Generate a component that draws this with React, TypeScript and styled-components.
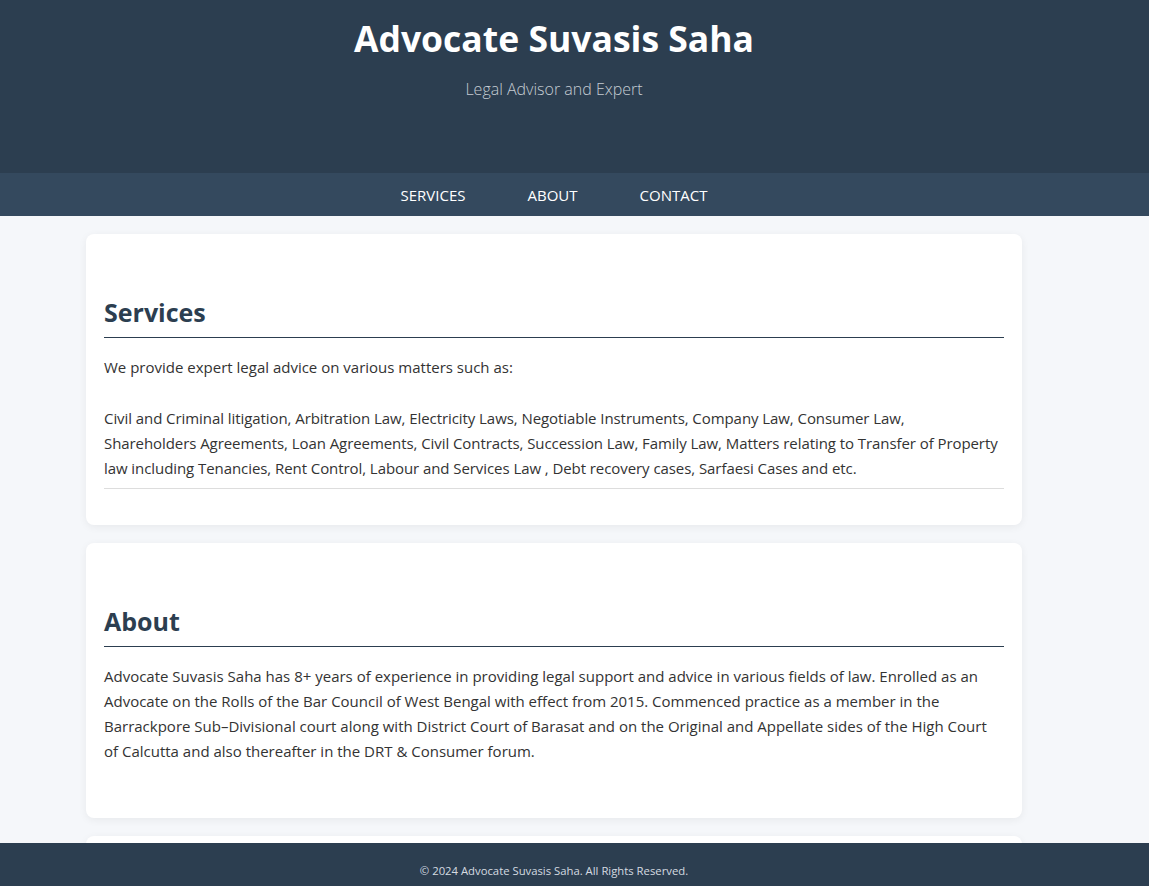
import React from "react";
import styled, { createGlobalStyle } from "styled-components";

const GlobalStyle = createGlobalStyle`
  html, body { margin: 0; padding: 0; }
  body {
    background: #f5f7fa;
    font-family: "Open Sans", "Noto Sans", sans-serif;
    color: #333;
  }
`;

const SHIFT = "41px";

const Header = styled.header`
  background: #2c3e50;
  color: #fff;
  height: 173px;
  padding-right: ${SHIFT};
  display: flex;
  flex-direction: column;
  align-items: center;
`;

const Title = styled.h1`
  margin: 14px 0 0;
  font-size: 35.5px;
  font-weight: 700;
  line-height: 48px;
`;

const Subtitle = styled.p`
  margin: 16px 0 0;
  font-size: 16px;
  font-weight: 300;
  color: #c5ccd3;
  line-height: 22px;
`;

const Nav = styled.nav`
  background: #34495e;
  height: 43px;
  padding-right: ${SHIFT};
  display: flex;
  justify-content: center;
  align-items: center;
`;

const NavLink = styled.a`
  color: #fff;
  text-decoration: none;
  font-size: 15px;
  line-height: 20px;
  margin: 1px 31px 0;
  text-transform: uppercase;
`;

const Main = styled.main`
  padding: 18px ${SHIFT} 60px 0;
  display: flex;
  flex-direction: column;
  align-items: center;
  gap: 18px;
`;

const Card = styled.section<{ $tail: number }>`
  width: 900px;
  background: #fff;
  border-radius: 8px;
  box-shadow: 0 2px 8px rgba(0, 0, 0, 0.06);
  padding: 63px 18px ${(p) => p.$tail}px;
`;

const Heading = styled.h2`
  margin: 0;
  font-size: 25px;
  font-weight: 700;
  line-height: 31px;
  color: #2c3e50;
  padding-bottom: 9px;
  border-bottom: 1px solid #2c3e50;
`;

const Text = styled.p<{ $top: number; $tight?: boolean }>`
  margin: ${(p) => p.$top}px 0 0;
  font-size: 15px;
  line-height: 25px;
  letter-spacing: ${(p) => (p.$tight ? "-0.07px" : "0")};
`;

const Rule = styled.hr`
  border: none;
  border-top: 1px solid #ddd;
  margin: 7px 0 0;
`;

const Footer = styled.footer`
  position: fixed;
  left: 0;
  right: 0;
  bottom: 0;
  height: 43px;
  background: #2c3e50;
  color: #d5dbe0;
  font-size: 11.3px;
  display: flex;
  align-items: center;
  justify-content: center;
  padding-top: 12px;
  box-sizing: border-box;
  padding-right: ${SHIFT};
`;

export default function App() {
  return (
    <>
      <GlobalStyle />
      <Header>
        <Title>Advocate Suvasis Saha</Title>
        <Subtitle>Legal Advisor and Expert</Subtitle>
      </Header>
      <Nav>
        <NavLink href="#services">Services</NavLink>
        <NavLink href="#about">About</NavLink>
        <NavLink href="#contact">Contact</NavLink>
      </Nav>
      <Main>
        <Card id="services" $tail={36}>
          <Heading>Services</Heading>
          <Text $top={17}>We provide expert legal advice on various matters such as:</Text>
          <Text $top={26} $tight>
            Civil and Criminal litigation, Arbitration Law, Electricity Laws, Negotiable Instruments, Company Law, Consumer Law,
            <br />
            Shareholders Agreements, Loan Agreements, Civil Contracts, Succession Law, Family Law, Matters relating to Transfer of Property
            law including Tenancies, Rent Control, Labour and Services Law , Debt recovery cases, Sarfaesi Cases and etc.
          </Text>
          <Rule />
        </Card>
        <Card id="about" $tail={54}>
          <Heading>About</Heading>
          <Text $top={17}>
            Advocate Suvasis Saha has 8+ years of experience in providing legal support and advice in various fields of law. Enrolled as an
            Advocate on the Rolls of the Bar Council of West Bengal with effect from 2015. Commenced practice as a member in the
            Barrackpore Sub–Divisional court along with District Court of Barasat and on the Original and Appellate sides of the High Court
            of Calcutta and also thereafter in the DRT &amp; Consumer forum.
          </Text>
        </Card>
        <Card id="contact" $tail={40}>
          <Heading>Contact</Heading>
        </Card>
      </Main>
      <Footer>© 2024 Advocate Suvasis Saha. All Rights Reserved.</Footer>
    </>
  );
}
